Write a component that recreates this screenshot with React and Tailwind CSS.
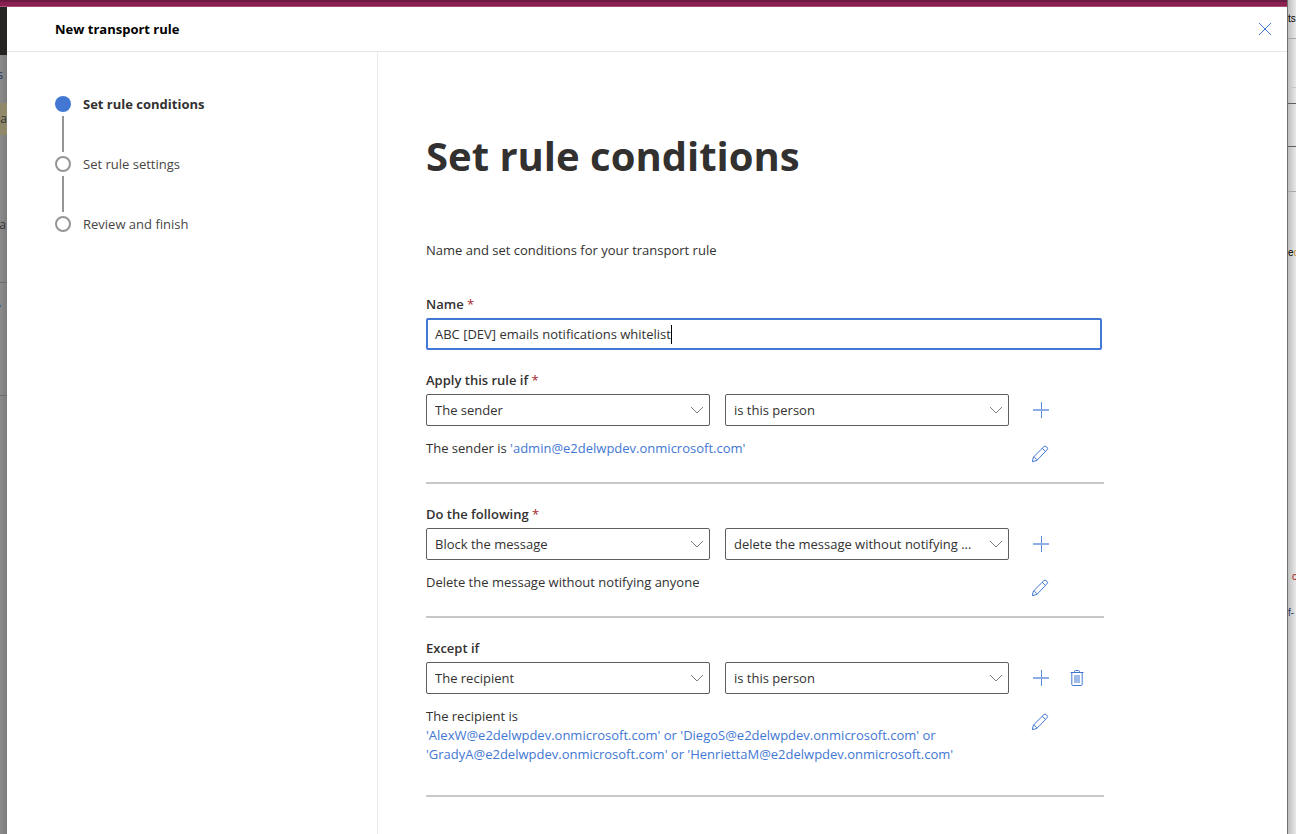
import React from "react";

const STEPS = [
  { title: "Set rule conditions", active: true },
  { title: "Set rule settings", active: false },
  { title: "Review and finish", active: false },
];

function CloseIcon() {
  return (
    <svg width="16" height="16" viewBox="0 0 16 16" fill="none" stroke="#4277d3" strokeWidth="1" aria-hidden="true">
      <path d="M2 2l12 12M14 2L2 14" />
    </svg>
  );
}

function PlusIcon() {
  return (
    <svg width="18" height="18" viewBox="0 0 18 18" fill="none" aria-hidden="true">
      <path d="M10.5 1v16" stroke="#5b89db" strokeWidth="1" />
      <path d="M2 9h16" stroke="#8dade9" strokeWidth="2" />
    </svg>
  );
}

function PencilIcon() {
  return (
    <svg width="18" height="18" viewBox="0 0 18 18" fill="none" stroke="#4277d3" strokeWidth="1" strokeLinejoin="round" aria-hidden="true">
      <path d="M1.3 16.7l1.1-4.6L12.5 2a2.1 2.1 0 0 1 3.2 0 2.1 2.1 0 0 1 0 3.2L5.8 15.5z" />
      <path d="M11.2 3.2l3.3 3.3M2.4 12.1c1.5 0 2 .6 2 1.5.9 0 1.4.6 1.4 1.9" />
    </svg>
  );
}

function TrashIcon() {
  return (
    <svg width="16" height="18" viewBox="0 0 16 18" fill="none" stroke="#4277d3" strokeWidth="1" aria-hidden="true">
      <path d="M1.5 3.5h13M5.5 3.5v-1c0-.6.4-1 1-1h3c.6 0 1 .4 1 1v1" />
      <path d="M2.8 3.5v12c0 .6.4 1 1 1h8.4c.6 0 1-.4 1-1v-12" />
      <path d="M6 6v8M8 6v8M10 6v8" />
    </svg>
  );
}

function IconButton({ label, children }) {
  return (
    <button type="button" aria-label={label} className="flex size-8 shrink-0 items-center justify-center">
      {children}
    </button>
  );
}

function Dropdown({ id, label, value }) {
  return (
    <div className="relative min-w-0 flex-1">
      <select
        id={id}
        aria-label={label}
        defaultValue={value}
        className="h-8 w-full appearance-none truncate rounded-xs border border-[#605e5c] bg-white pr-7 pl-2 text-[#323130]"
      >
        <option value={value}>{value}</option>
      </select>
      <svg
        className="pointer-events-none absolute top-2 right-1.5"
        width="14"
        height="16"
        viewBox="0 0 14 16"
        fill="none"
        stroke="#808080"
        aria-hidden="true"
      >
        <path d="M1 5l6 6 6-6" />
      </svg>
    </div>
  );
}

function Required() {
  return <span className="font-normal text-[#a4262c]"> *</span>;
}

function RuleSection({ id, title, required, first, second, removable, children }) {
  return (
    <section className="mt-5 border-b-2 border-[#c8c8c8] pb-3">
      <label htmlFor={id} className="block font-semibold">
        {title}
        {required && <Required />}
      </label>
      <div className="mt-1 flex gap-[15px]">
        <Dropdown id={id} value={first} />
        <Dropdown label={title + " detail"} value={second} />
        <div className="flex w-20 gap-[5px]">
          <IconButton label="Add">
            <PlusIcon />
          </IconButton>
          {removable && (
            <IconButton label="Remove">
              <TrashIcon />
            </IconButton>
          )}
        </div>
      </div>
      <div className="mt-3 flex gap-[15px]">
        <div className="min-w-0 flex-1 pt-px leading-[19px]">{children}</div>
        <div className="w-20">
          <IconButton label="Edit">
            <PencilIcon />
          </IconButton>
        </div>
      </div>
    </section>
  );
}

function PageEdgeLeft() {
  return (
    <div
      aria-hidden="true"
      className="w-[7px] shrink-0 overflow-hidden bg-linear-to-r from-[#8b8b8b] to-[#7c7c7c] text-[12px] text-[#333]"
    >
      <div className="h-12 bg-[#252423]" />
      <div className="flex h-10 items-center justify-end pr-1 text-[#1f3864]">s</div>
      <div className="mt-2 flex h-8 items-center justify-end bg-[#8f8869]">a</div>
      <div className="mt-[74px] flex h-8 items-center justify-end pr-px">a</div>
      <div className="mt-[41px] h-px bg-[#6c6c6c]" />
      <div className="mt-[22px] h-[2px] w-px bg-[#2f6a8f]" />
      <div className="mt-[88px] h-px bg-[#6c6c6c]" />
    </div>
  );
}

function PageEdgeRight() {
  return (
    <div
      aria-hidden="true"
      className="w-[9px] shrink-0 overflow-hidden border-l border-[#707070] bg-linear-to-r from-[#bfbfbf] to-[#e8e8e8] font-['Liberation_Sans',sans-serif] text-[10px] text-black"
    >
      <div className="flex h-[39px] items-center border-b border-[#a8a8a8]">ts</div>
      <div className="h-[49px] border-b border-[#c6c6c6]" />
      <div className="h-4 border-b border-[#606060]" />
      <div className="h-[43px] border-b border-[#606060]" />
      <div className="h-[45px] border-b border-[#a8a8a8]" />
      <div className="mt-[51px] flex h-5">
        e<span className="text-[#c88a1a]">c</span>
      </div>
      <div className="mt-[304px] h-5 pl-1 text-[#a31515]">c</div>
      <div className="mt-4 flex h-5 text-[#1f3864]">f-</div>
    </div>
  );
}

export default function App() {
  return (
    <div className="flex min-h-screen bg-white font-['Open_Sans','Noto_Sans',sans-serif] text-[13px] leading-5 text-[#323130]">
      <div className="flex min-w-0 flex-1 flex-col">
        <div className="h-[7px] border-t-2 border-b border-t-[#6a1b42] border-b-[#a5507a] bg-[#8a1f50]" />
        <div className="flex flex-1">
          <PageEdgeLeft />
          <div className="flex min-w-0 flex-1 flex-col">
            <header className="flex h-[45px] items-center justify-between border-b border-[#e6e6e6] pr-1.5 pl-12">
              <h2 className="font-bold text-black">New transport rule</h2>
              <IconButton label="Close">
                <CloseIcon />
              </IconButton>
            </header>
            <div className="flex flex-1">
              <nav aria-label="Steps" className="w-[371px] shrink-0 border-r border-[#eaeaea] pt-11 pl-12">
                <ol>
                  {STEPS.map((step, index) => (
                    <li key={step.title}>
                      {index > 0 && <div className="my-1 ml-[7px] h-9 w-0.5 bg-[#979593]" />}
                      <div className="flex h-4 items-center gap-3">
                        <span
                          className={
                            step.active
                              ? "size-4 rounded-full bg-[#4277d3]"
                              : "size-4 rounded-full border-2 border-[#979593]"
                          }
                        />
                        <span className={step.active ? "font-bold" : "text-[#484644]"}>{step.title}</span>
                      </div>
                    </li>
                  ))}
                </ol>
              </nav>
              <main className="min-w-0 flex-1 px-12 pt-[76px] pb-9">
                <form className="max-w-[678px]">
                  <h1 className="text-[40px] leading-[56px] font-bold">Set rule conditions</h1>
                  <p className="mt-14">Name and set conditions for your transport rule</p>
                  <label htmlFor="rule-name" className="mt-[34px] block font-semibold">
                    Name
                    <Required />
                  </label>
                  <div className="mt-1 mr-0.5 flex h-8 items-center rounded-xs border-2 border-[#4277d3] pl-[7px]">
                    <input
                      id="rule-name"
                      type="text"
                      defaultValue="ABC [DEV] emails notifications whitelist"
                      className="field-sizing-content h-full caret-transparent outline-none"
                    />
                    <span className="h-[19px] w-px bg-black" />
                  </div>

                  <RuleSection
                    id="apply-if"
                    title="Apply this rule if"
                    required
                    first="The sender"
                    second="is this person"
                  >
                    The sender is{" "}
                    <a href="#sender" className="text-[#4277d3]">
                      'admin@e2delwpdev.onmicrosoft.com'
                    </a>
                  </RuleSection>

                  <RuleSection
                    id="do-following"
                    title="Do the following"
                    required
                    first="Block the message"
                    second="delete the message without notifying ..."
                  >
                    Delete the message without notifying anyone
                  </RuleSection>

                  <RuleSection
                    id="except-if"
                    title="Except if"
                    first="The recipient"
                    second="is this person"
                    removable
                  >
                    <p>The recipient is</p>
                    <a href="#recipients" className="block pb-[19px] text-[#4277d3]">
                      'AlexW@e2delwpdev.onmicrosoft.com' or 'DiegoS@e2delwpdev.onmicrosoft.com' or
                      <br />
                      'GradyA@e2delwpdev.onmicrosoft.com' or 'HenriettaM@e2delwpdev.onmicrosoft.com'
                    </a>
                  </RuleSection>
                </form>
              </main>
            </div>
          </div>
        </div>
      </div>
      <PageEdgeRight />
    </div>
  );
}
